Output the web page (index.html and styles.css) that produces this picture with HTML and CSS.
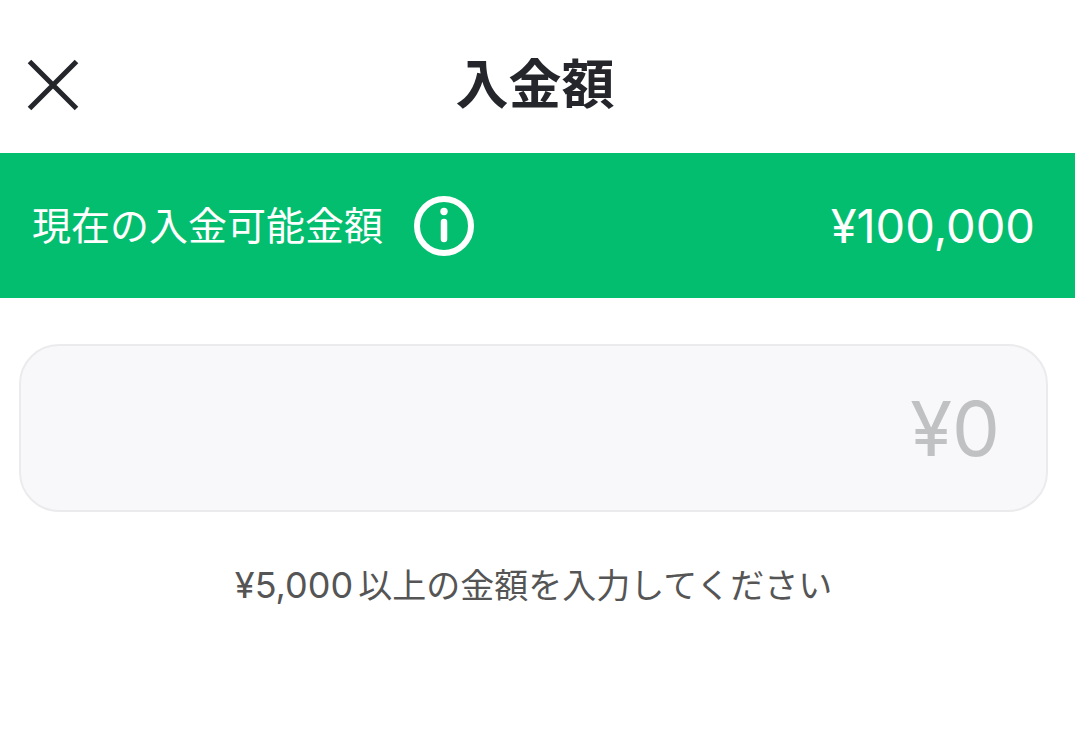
FILE: index.html
```
<!DOCTYPE html>
<html lang="ja">
<head>
  <meta charset="UTF-8" />
  <meta name="viewport" content="width=device-width, initial-scale=1.0"/>
  <title>入金額</title>
  <link rel="stylesheet" href="styles.css">
</head>
<body>

  <header class="header">
    <button type="button" class="icon-btn close-btn" aria-label="閉じる">
      <svg width="52" height="52" viewBox="0 0 52 52" fill="none" stroke="currentColor" stroke-width="5">
        <path d="M2.5 2.5L49.5 49.5M49.5 2.5L2.5 49.5"/>
      </svg>
    </button>
    <h1>入金額</h1>
  </header>

  <main>
    <section class="limit-bar">
      <span class="limit-label">現在の入金可能金額</span>
      <button type="button" class="icon-btn info-btn" aria-label="詳細">
        <svg width="60" height="60" viewBox="0 0 60 60" fill="none" stroke="currentColor">
          <circle cx="30" cy="30" r="27" stroke-width="6"/>
          <circle cx="30" cy="15.5" r="3.7" fill="currentColor" stroke="none"/>
          <path d="M30 26V43" stroke-width="6.5" stroke-linecap="round"/>
        </svg>
      </button>
      <span class="limit-amount">¥100,000</span>
    </section>

    <form class="amount-form">
      <input type="text" id="amount" class="amount-input" inputmode="numeric" placeholder="¥0" />
      <label for="amount" class="amount-hint"><span class="hint-number">¥5,000</span>以上の金額を入力してください</label>
    </form>
  </main>

</body>
</html>
```
FILE: styles.css
```
* {
  box-sizing: border-box;
}

body {
  margin: 0;
  font-family: Inter, "Noto Sans CJK JP", sans-serif;
  background: #fff;
  color: #25262b;
}

/* Header */
.header {
  display: grid;
  grid-template-columns: 52px 1fr 52px;
  align-items: center;
  padding: 49px 32px 32px 27px;
}

h1 {
  margin: 0;
  font-size: 53px;
  line-height: 72px;
  font-weight: 700;
  text-align: center;
}

.icon-btn {
  display: flex;
  padding: 0;
  border: none;
  background: none;
  color: inherit;
  cursor: pointer;
}

/* Available amount */
.limit-bar {
  display: flex;
  align-items: center;
  gap: 31px;
  padding: 43px 40px 42px 32px;
  background: #04be70;
  color: #fff;
}

.limit-label {
  font-size: 39px;
  line-height: 60px;
}

.limit-amount {
  margin-left: auto;
  font-size: 47px;
  line-height: 60px;
}

/* Amount input */
.amount-form {
  display: flex;
  flex-direction: column;
  padding: 46px 27px 46px 19px;
}

.amount-input {
  width: 100%;
  padding: 40px 46px;
  border: 2px solid #ebebed;
  border-radius: 40px;
  background: #f8f8fa;
  color: #25262b;
  font-family: inherit;
  font-size: 76px;
  line-height: 84px;
  height: 168px;
  text-align: right;
  outline: none;
}

.amount-input::placeholder {
  color: #c0c1c3;
  opacity: 1;
}

.amount-hint {
  margin-top: 49px;
  color: #555;
  font-size: 34px;
  line-height: 48px;
  text-align: center;
}

.hint-number {
  margin-right: 5px;
  font-size: 36px;
}
```
